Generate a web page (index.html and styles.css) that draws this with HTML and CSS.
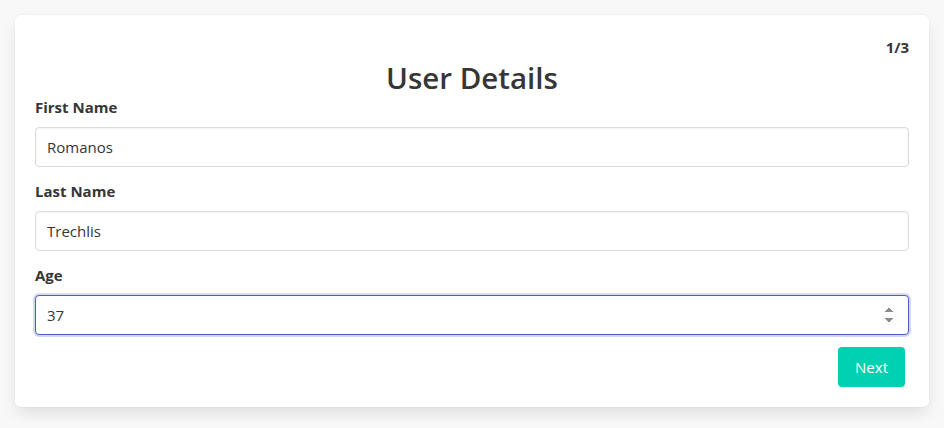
FILE: index.html
```html
<!DOCTYPE html>
<html lang="en">
<head>
<meta charset="utf-8">
<title>User Details</title>
<link rel="stylesheet" href="styles.css">
</head>
<body>
<div class="card">
  <div class="step">1/3</div>
  <h1 class="title">User Details</h1>
  <div class="field">
    <label class="label" for="first">First Name</label>
    <input class="input" id="first" type="text" value="Romanos">
  </div>
  <div class="field">
    <label class="label" for="last">Last Name</label>
    <input class="input" id="last" type="text" value="Trechlis">
  </div>
  <div class="field">
    <label class="label" for="age">Age</label>
    <input class="input is-focused" id="age" type="number" value="37" autofocus>
  </div>
  <div class="actions">
    <button class="button" type="button">Next</button>
  </div>
</div>
</body>
</html>
```
FILE: styles.css
```css
html, body {
  margin: 0;
  padding: 0;
}
body {
  background: #f8f8f8;
  font-family: "Open Sans", "Noto Sans", sans-serif;
  color: #363636;
  font-size: 16px;
  line-height: 1.5;
  padding: 15px;
}
.card {
  background: #fff;
  border-radius: 6px;
  box-shadow: 0 0.5em 1em -0.125em rgba(10,10,10,0.1), 0 0 0 1px rgba(10,10,10,0.02);
  padding: 20px;
  display: flex;
  flex-direction: column;
}
.step {
  text-align: right;
  font-weight: 700;
  font-size: 15px;
  line-height: 24px;
}
.title {
  margin: 0;
  text-align: center;
  font-size: 29.5px;
  font-weight: 600;
  line-height: 36px;
  padding-top: 1px;
  margin-bottom: -1px;
}
.field {
  display: flex;
  flex-direction: column;
  margin-bottom: 12px;
}
.label {
  font-weight: 700;
  font-size: 15px;
  line-height: 24px;
  margin-bottom: 8px;
}
.input {
  box-sizing: border-box;
  height: 40px;
  width: 100%;
  border: 1px solid #dbdbdb;
  border-radius: 4px;
  padding: 0 11px;
  font-family: inherit;
  font-size: 15px;
  color: #363636;
  background: #fff;
  box-shadow: inset 0 0.0625em 0.125em rgba(10,10,10,0.05);
  outline: none;
}
.input.is-focused, .input:focus {
  border-color: #485fc7;
  box-shadow: 0 0 0 0.125em rgba(72,95,199,0.25);
}
.actions {
  display: flex;
  justify-content: flex-end;
  padding-right: 4px;
}
.button {
  height: 40px;
  padding: 0 17px;
  border: none;
  border-radius: 4px;
  background: #00d1b2;
  color: #fff;
  font-family: inherit;
  font-size: 15px;
}
```
